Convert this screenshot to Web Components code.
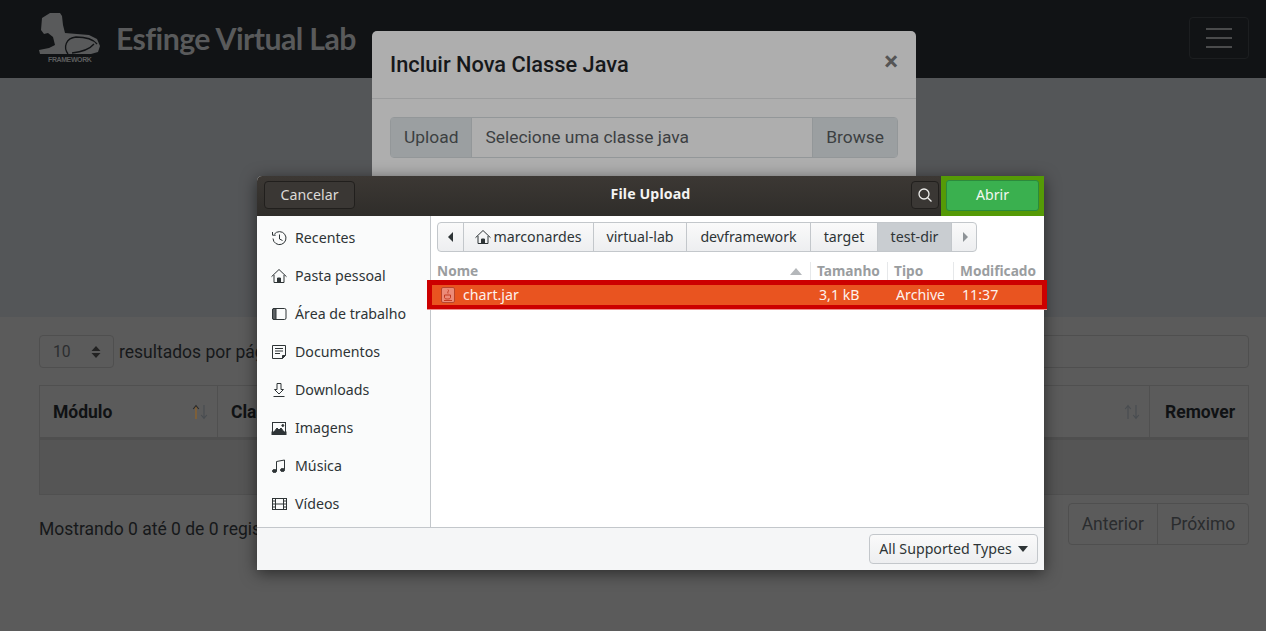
<!DOCTYPE html>
<html lang="pt">
<head>
<meta charset="utf-8">
<title>Esfinge Virtual Lab</title>
<style>
    html, body { margin: 0; height: 631px; overflow: hidden; background: #5b5b5b; }
</style>
</head>
<body>
<app-page></app-page>
<script>
const SORT_ICON = `
    <svg width="20" height="20" viewBox="0 0 20 20" fill="none" stroke-width="1.1">
        <path d="M6 17V4" stroke="var(--stem, #484c50)"/>
        <path d="M3.200 7L6 3.600 8.800 7" stroke="var(--up, #484c50)"/>
        <path d="M14 3v13M11.200 13l2.800 3.400 2.800-3.400" stroke="#484c50"/>
    </svg>`;

const ICONS = {
    clock: `<path d="M3.300 4.200A6.500 6.500 0 1 1 2 8.500"/><path d="M1.500 2v3.200h3.200"/><path d="M8.500 4.500v4.500l3 1.500"/>`,
    home: `<path d="M.5 8.700L8 1.500l7.500 7.200"/><path d="M3 7v7.500h10V7"/><path d="M6.500 14.500V10h3v4.500" fill="#2e3436"/>`,
    desktop: `<rect x="1.500" y="2.500" width="13.500" height="11" rx="1.500"/><path d="M1.500 4a1.500 1.500 0 0 1 1.500-1.500h2v11H3A1.500 1.500 0 0 1 1.500 12z" fill="#5d6164"/>`,
    doc: `<path d="M1.500 1.500h13v10l-3 3h-10z"/><path d="M4 4.500h8M4 7h8M4 9.500h5"/><path d="M11.500 14.500v-3h3" fill="#2e3436"/>`,
    download: `<path d="M6 1.500h4v6h2.500L8 12 3.500 7.500H6z"/><path d="M2.500 14.500h11"/>`,
    image: `<rect x="1.500" y="2.500" width="13" height="11.500"/><path d="M3 12l3-4 2 2 2-2 3 4z" fill="#2e3436"/><rect x="1" y="12" width="14" height="2.500" fill="#2e3436"/><circle cx="11.800" cy="5.500" r="1" fill="#2e3436"/>`,
    music: `<path d="M5.500 13V3.500l8-1.500v9.500"/><ellipse cx="3.500" cy="13" rx="2" ry="1.500" fill="#2e3436"/><ellipse cx="11.500" cy="12" rx="2" ry="1.500" fill="#2e3436"/>`,
    film: `<rect x="1.500" y="2.500" width="14" height="11"/><path d="M4.500 2.500v11M12.500 2.500v11M4.500 8h8M1.500 5h3M1.500 8h3M1.500 11h3M12.500 5h3M12.500 8h3M12.500 11h3"/>`
};

class NavBar extends HTMLElement {
    connectedCallback() {
        const shadow = this.attachShadow({ mode: "open" });
        shadow.innerHTML = `
        <style>
            :host { display: flex; height: 78px; background: #111315; justify-content: space-between; padding: 0 17px 0 39px; box-sizing: border-box; }
            .brand { display: flex; gap: 15px; color: #595a5b; }
            .mark { position: relative; width: 62px; height: 52px; margin-top: 13px; }
            .mark small { position: absolute; left: 9px; top: 42px; font: 700 7px/9px "Liberation Sans", sans-serif; letter-spacing: -.4px; color: #5c5d5e; white-space: nowrap; }
            .name { font: 700 30.300px/34px Lato, sans-serif; letter-spacing: -.6px; margin-top: 21px; }
            .toggler { width: 60px; height: 42px; margin-top: 17px; box-sizing: border-box; border: 1px solid #1c1e20; border-radius: 4px; display: flex; flex-direction: column; justify-content: center; align-items: center; gap: 7px; }
            .toggler i { display: block; width: 26px; height: 2px; background: #4a4b4c; }
        </style>
        <div class="brand">
            <div class="mark">
                <svg width="62" height="44" viewBox="0 0 62 44">
                    <path fill="#595a5b" d="M11 0 L21 0 L23 3 L24 12 L26 20 L38 21 L50 22 L58 26 L61 33 L59 39 L52 41 L38 41 L1 41 L0 37 L10 35 L16 32 L14 24 L9 20 L5 21 L2 17 L3 5 Z"/>
                    <path fill="none" stroke="#111315" stroke-width="1.300" d="M29 41 C24 34 27 25 37 24 C46 24 54 26 58 31 M33 40 C42 39 50 37 55 31"/>
                </svg>
                <small>FRAMEWORK</small>
            </div>
            <div class="name">Esfinge Virtual Lab</div>
        </div>
        <div class="toggler"><i></i><i></i><i></i></div>`;
    }
}

class TablePanel extends HTMLElement {
    connectedCallback() {
        const shadow = this.attachShadow({ mode: "open" });
        shadow.innerHTML = `
        <style>
            :host { display: block; padding: 18px 17px 0 39px; color: #101214; font: 17.500px/26px Roboto, sans-serif; }
            .controls { display: flex; gap: 5px; align-items: center; height: 33px; }
            .select { width: 75px; height: 33px; box-sizing: border-box; border: 1px solid #4f4f4f; border-radius: 4px; padding: 0 12px 0 13px; display: flex; align-items: center; justify-content: space-between; font-size: 15.750px; color: #2b2d2f; }
            .select svg { display: block; }
            .label { color: #16181a; white-space: nowrap; }
            .search { flex: 1; height: 33px; box-sizing: border-box; border: 1px solid #4f4f4f; border-radius: 4px; margin-left: 350px; }
            .table { margin-top: 17px; border: 1px solid #505050; height: 110px; box-sizing: border-box; background: #555555; }
            .head { display: grid; grid-template-columns: 178px 1fr 98px; height: 54px; box-sizing: border-box; border-bottom: 3px solid #4f4f4f; font-weight: 700; background: #5b5b5b; }
            .th { display: flex; align-items: center; justify-content: space-between; padding: 0 7px 0 13px; border-right: 1px solid #505050; white-space: nowrap; }
            .th:last-child { border-right: 0; padding-left: 15px; }
            .th svg { display: block; }
            .th.first { --stem: #9a6420; --up: #2a2a2a; }
            .bottom { display: flex; justify-content: space-between; margin-top: 8px; }
            .info { margin-top: 13px; color: #16181a; }
            .pager { display: flex; height: 42px; box-sizing: border-box; border: 1px solid #4f4f4f; border-radius: 4px; color: #2a2c2e; }
            .pager span { padding: 7px 12.750px 0; }
            .pager span + span { border-left: 1px solid #4f4f4f; }
        </style>
        <div class="controls">
            <div class="select">10
                <svg width="10" height="14" viewBox="0 0 10 14" fill="#222"><path d="M5 1l4.500 5h-9zM5 13L.5 8h9z"/></svg>
            </div>
            <span class="label">resultados por página</span>
            <div class="search"></div>
        </div>
        <div class="table">
            <div class="head">
                <div class="th first">Módulo ${SORT_ICON}</div>
                <div class="th">Classe ${SORT_ICON}</div>
                <div class="th">Remover</div>
            </div>
        </div>
        <div class="bottom">
            <div class="info">Mostrando 0 até 0 de 0 registros</div>
            <div class="pager"><span>Anterior</span><span>Próximo</span></div>
        </div>`;
    }
}

class ClassModal extends HTMLElement {
    connectedCallback() {
        const shadow = this.attachShadow({ mode: "open" });
        shadow.innerHTML = `
        <style>
            :host { position: absolute; left: 372px; top: 31px; width: 544px; height: 300px; background: #aeaeae; border-radius: 5px; font: 17.400px/26px Roboto, sans-serif; color: #16181a; overflow: hidden; }
            header { display: flex; justify-content: space-between; height: 68px; box-sizing: border-box; padding: 18px 18px 0; border-bottom: 1px solid #9c9d9e; }
            h5 { margin: 0; font: 500 21.800px/32px Roboto, sans-serif; }
            .close { font: 700 26px/26px Roboto, sans-serif; color: #555; margin-top: -1px; }
            .body { padding: 18px; }
            .file { display: flex; height: 41px; box-sizing: border-box; border: 1px solid #939799; border-radius: 4px; color: #3c3f42; }
            .addon { padding: 6px 13px 0; background: #9b9fa1; }
            .addon:first-child { border-right: 1px solid #939799; }
            .addon:last-child { border-left: 1px solid #939799; }
            .text { flex: 1; padding: 6px 13px 0; }
        </style>
        <header><h5>Incluir Nova Classe Java</h5><span class="close">×</span></header>
        <div class="body">
            <div class="file"><span class="addon">Upload</span><span class="text">Selecione uma classe java</span><span class="addon">Browse</span></div>
        </div>`;
    }
}

class PlaceItem extends HTMLElement {
    connectedCallback() {
        const shadow = this.attachShadow({ mode: "open" });
        shadow.innerHTML = `
        <style>
            :host { display: flex; align-items: center; gap: 8px; height: 38px; padding-left: 14px; }
            svg { display: block; flex: none; }
        </style>
        <svg width="16" height="16" viewBox="0 0 16 16" fill="none" stroke="#2e3436" stroke-width="1">${ICONS[this.getAttribute("icon")]}</svg>
        <slot></slot>`;
    }
}

class PathBar extends HTMLElement {
    connectedCallback() {
        const shadow = this.attachShadow({ mode: "open" });
        shadow.innerHTML = `
        <style>
            :host { display: grid; grid-template-columns: 26px 130px 93px 124px 67px 74px 26px; width: 540px; height: 30px; box-sizing: border-box; border: 1px solid #c3c7cb; border-radius: 4px; background: linear-gradient(#fafafa, #edeef0); color: #2e3436; }
            div { display: flex; align-items: center; justify-content: center; border-right: 1px solid #c3c7cb; gap: 2px; }
            div:last-child { border-right: 0; }
            .active { background: #c9cdd1; }
            svg { display: block; }
        </style>
        <div><svg width="8" height="10" viewBox="0 0 8 10" fill="#2e3436"><path d="M6 0v10L1 5z"/></svg></div>
        <div><svg width="16" height="16" viewBox="0 0 16 16" fill="none" stroke="#2e3436">${ICONS.home}</svg>marconardes</div>
        <div>virtual-lab</div>
        <div>devframework</div>
        <div>target</div>
        <div class="active">test-dir</div>
        <div><svg width="8" height="10" viewBox="0 0 8 10" fill="#8e9397"><path d="M2 0v10l5-5z"/></svg></div>`;
    }
}

class FileDialog extends HTMLElement {
    connectedCallback() {
        const shadow = this.attachShadow({ mode: "open" });
        shadow.innerHTML = `
        <style>
            :host { position: absolute; left: 257px; top: 176px; width: 787px; height: 394px; display: grid; grid-template-rows: 40px 1fr 43px; grid-template-columns: 174px 1fr; background: #fff; border-radius: 5px 5px 0 0; box-shadow: 0 3px 16px rgba(0,0,0,.55); font: 14.200px/20px "Noto Sans", sans-serif; color: #2e3436; }
            .title { grid-column: 1 / 3; display: grid; grid-template-columns: 1fr auto 1fr; background: linear-gradient(#3c3834, #2f2d2a); border-radius: 5px 5px 0 0; color: #f4f3f2; }
            .btn { height: 28px; box-sizing: border-box; border: 1px solid #211f1d; border-radius: 4px; background: #3a3734; display: flex; align-items: center; justify-content: center; color: #dcdad7; padding-bottom: 1px; }
            .cancel { width: 91px; margin: 5px 0 0 7px; }
            .title b { font-weight: 700; margin-top: 8px; letter-spacing: .1px; }
            .actions { display: flex; justify-content: flex-end; gap: 2px; height: 40px; }
            .find { width: 28px; margin-top: 5px; }
            .green { width: 103px; height: 40px; box-sizing: border-box; background: #559a06; padding: 4px 5px 5px; }
            .open { height: 31px; border-radius: 3px; background: #3ab04f; border: 1px solid #2c8a3c; box-sizing: border-box; display: flex; align-items: center; justify-content: center; color: #f2f7f1; padding-bottom: 2px; }
            .side { background: #fafbfb; border-right: 1px solid #c3c7cb; padding-top: 3px; }
            .main { padding: 6px 0 0; position: relative; min-width: 0; }
            path-bar { margin-left: 6px; }
            .cols { display: grid; grid-template-columns: 379px 77px 66px 1fr; margin-top: 10px; height: 18px; align-items: center; font-weight: 700; font-size: 13.700px; color: #9a9d9f; }
            .cols span { padding-left: 6px; display: flex; justify-content: space-between; align-items: center; border-left: 1px solid #e6e8ea; height: 18px; }
            .cols span:first-child { border-left: 0; padding-right: 8px; }
            .row { position: absolute; left: -4px; right: -3px; top: 64px; height: 29px; box-sizing: border-box; border: 5px solid #cc0000; border-bottom-width: 4px; box-shadow: 0 1px 0 #ef8f8f; background: #e95420; color: #fdf1ec; display: grid; align-items: center; grid-template-columns: 381px 77px 66px 1fr; }
            .row span { padding-left: 6px; }
            .row .nm { display: flex; align-items: center; gap: 8px; padding-left: 9px; }
            .row svg { display: block; }
            .foot { grid-column: 1 / 3; border-top: 1px solid #c3c7cb; background: #f5f6f7; display: flex; justify-content: flex-end; align-items: center; padding-right: 6px; }
            .types { height: 30px; width: 169px; box-sizing: border-box; border: 1px solid #c3c7cb; border-radius: 4px; background: linear-gradient(#fafafa, #edeef0); display: flex; align-items: center; justify-content: center; gap: 6px; }
        </style>
        <div class="title">
            <div><div class="btn cancel">Cancelar</div></div>
            <b>File Upload</b>
            <div class="actions">
                <div class="btn find"><svg width="16" height="16" viewBox="0 0 16 16" fill="none" stroke="#eeeeec" stroke-width="1.300"><circle cx="7" cy="7" r="5"/><path d="M10.700 10.700L14.500 14.500"/></svg></div>
                <div class="green"><div class="open">Abrir</div></div>
            </div>
        </div>
        <div class="side">
            <place-item icon="clock">Recentes</place-item>
            <place-item icon="home">Pasta pessoal</place-item>
            <place-item icon="desktop">Área de trabalho</place-item>
            <place-item icon="doc">Documentos</place-item>
            <place-item icon="download">Downloads</place-item>
            <place-item icon="image">Imagens</place-item>
            <place-item icon="music">Música</place-item>
            <place-item icon="film">Vídeos</place-item>
        </div>
        <div class="main">
            <path-bar></path-bar>
            <div class="cols">
                <span>Nome <svg width="12" height="7" viewBox="0 0 12 7" fill="#b4b7ba"><path d="M6 0l6 7H0z"/></svg></span>
                <span>Tamanho</span><span>Tipo</span><span>Modificado</span>
            </div>
            <div class="row">
                <span class="nm">
                    <svg width="14" height="16" viewBox="0 0 14 16"><rect x=".5" y=".5" width="13" height="15" rx="1.500" fill="#ec8a78" stroke="#b8442b"/><path d="M7 2.500c1.500 1.500-1 2 0 4M3.500 8h6v2.500c0 1-1 1.500-3 1.500s-3-.5-3-1.500zM3 13.500h8" fill="none" stroke="#c23a22"/></svg>
                    chart.jar
                </span>
                <span>3,1 kB</span><span>Archive</span><span>11:37</span>
            </div>
        </div>
        <div class="foot">
            <div class="types">All Supported Types <svg width="10" height="6" viewBox="0 0 10 6" fill="#2e3436"><path d="M0 0h10L5 6z"/></svg></div>
        </div>`;
    }
}

class AppPage extends HTMLElement {
    connectedCallback() {
        const shadow = this.attachShadow({ mode: "open" });
        shadow.innerHTML = `
        <style>
            :host { display: block; position: relative; width: 1266px; height: 631px; overflow: hidden; background: #5b5b5b; }
            .hero { height: 239px; background: #545658; }
        </style>
        <nav-bar></nav-bar>
        <div class="hero"></div>
        <table-panel></table-panel>
        <class-modal></class-modal>
        <file-dialog></file-dialog>`;
    }
}

customElements.define("nav-bar", NavBar);
customElements.define("table-panel", TablePanel);
customElements.define("class-modal", ClassModal);
customElements.define("place-item", PlaceItem);
customElements.define("path-bar", PathBar);
customElements.define("file-dialog", FileDialog);
customElements.define("app-page", AppPage);
</script>
</body>
</html>
